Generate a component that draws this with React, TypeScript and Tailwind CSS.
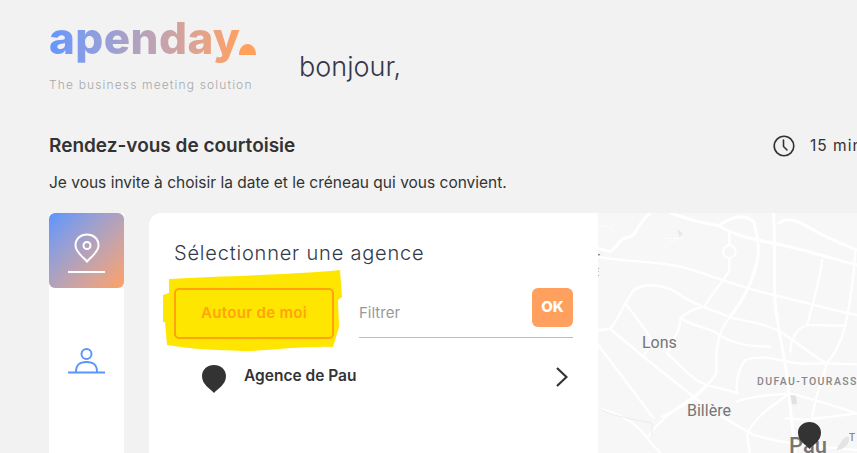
import React from 'react';

const Pin = ({ className }: { className: string }) => (
  <svg className={className} viewBox="0 0 24 28" fill="#333333">
    <path d="M12 28 C9 24 0 20 0 11 C0 4.5 5.4 0 12 0 C18.6 0 24 4.5 24 11 C24 20 15 24 12 28 Z" />
  </svg>
);

const roads = [
  'M3 130 L40 140 C70 120 60 100 100 95 C125 85 115 60 160 24',
  'M220 24 C280 45 320 55 365 62 C400 35 440 25 470 50 C480 90 490 130 480 170 C470 220 450 270 400 335',
  'M365 62 C420 95 480 105 530 115 C610 130 700 160 780 180',
  'M530 24 C535 140 530 240 535 300 C545 390 570 480 575 560 C580 620 590 690 595 744',
  'M545 55 C570 35 600 45 640 70 C680 95 730 115 780 135',
  'M3 155 C60 170 150 165 250 185 C330 205 400 240 530 270 C620 290 700 315 780 330',
  'M397 85 L397 120 M397 160 L397 195 C385 225 350 255 325 300',
  'M3 375 L40 372 C70 330 85 290 110 255 C150 230 210 240 250 270 C290 300 360 320 410 340 C470 350 510 360 550 380 C600 410 640 450 690 475 L780 478',
  'M325 305 C290 310 265 325 250 340 C290 365 340 370 360 385 C400 415 460 425 520 425',
  'M400 335 C370 370 355 410 358 500 C350 530 320 545 290 575 C240 610 190 640 150 700',
  'M40 372 C120 440 220 520 290 575 C340 620 420 660 470 690 C540 710 600 720 780 735',
  'M88 300 C120 340 150 375 165 410 C150 430 145 445 140 455 M250 340 C250 380 230 400 210 445 C250 480 290 530 330 540 C360 550 400 555 420 565',
  'M420 565 C415 530 425 490 445 465 C490 450 530 462 575 470 M575 470 C600 480 640 475 690 475',
  'M630 360 C650 290 670 220 675 165 M580 440 C580 400 600 370 630 360 L745 362 C760 290 770 230 775 135',
  'M690 475 C720 440 735 400 745 362 M690 475 L660 570 C650 610 640 650 640 680',
  'M575 565 C630 575 700 600 780 625 M420 590 C470 570 530 570 575 565 C540 600 480 620 450 690 L458 744',
  'M3 420 C50 480 110 560 170 640 M195 635 C250 605 290 590 330 540',
  'M3 610 C60 625 120 650 150 700 L190 744',
  'M565 640 L625 645 L780 625',
];

const Map = () => (
  <div className="relative flex-1 overflow-hidden bg-[#f7f7f7]">
    <svg className="h-[240px] w-[259px]" viewBox="3 24 777 720" fill="none" stroke="#ffffff" strokeLinecap="round" strokeLinejoin="round">
      {roads.map((d, i) => (
        <path key={i} d={d} strokeWidth={i < 5 ? 9 : 7} />
      ))}
      <circle cx="397" cy="140" r="19" strokeWidth="6" />
      <path d="M240 72 L258 85 L248 97 Z" fill="#e8e8e8" stroke="none" />
      <path d="M580 570 L597 572 L600 598 L585 598 Z" fill="#e2e2e2" stroke="none" />
      <path d="M718 735 C730 710 745 690 755 695 C762 715 740 735 718 735 Z" fill="#e4e4e4" stroke="none" />
      <path d="M195 100 L260 100 M200 128 C215 115 235 105 245 100 M5 60 L45 68 L50 85" stroke="#ffffff" strokeWidth="2" />
      <path d="M3 610 C60 640 110 640 165 655 L165 690" stroke="#ececec" strokeWidth="3" />
    </svg>
    <span className="absolute left-[-3px] top-[33px] font-['Roboto',sans-serif] text-[15px] text-[#757575]">r</span>
    <span className="absolute left-[-5px] top-[52px] font-['Roboto',sans-serif] text-[11px] text-[#888888]">E</span>
    <span className="absolute left-[44px] top-[120px] font-['Roboto',sans-serif] text-[16px] leading-5 text-[#757575]">Lons</span>
    <span className="absolute left-[89px] top-[188px] font-['Roboto',sans-serif] text-[16px] leading-5 text-[#757575]">Billère</span>
    <span className="absolute left-[159px] top-[161px] whitespace-nowrap font-['Roboto',sans-serif] text-[10.5px] font-medium leading-4 tracking-[1.4px] text-[#888888]">DUFAU-TOURASSE</span>
    <span className="absolute left-[191px] top-[221px] font-['Roboto',sans-serif] text-[22px] font-medium leading-6 text-[#757575]">Pau</span>
    <span className="absolute left-[251px] top-[217px] font-['Roboto',sans-serif] text-[10px] font-medium leading-4 text-[#888888]">T</span>
    <Pin className="absolute left-[200px] top-[207px] h-[31px] w-[23px]" />
  </div>
);

const App: React.FC = () => {
  return (
    <div className="h-[453px] w-[857px] overflow-hidden bg-[#f2f2f2] font-['Inter',sans-serif] text-[#333333]">
      <div className="flex h-[103px] w-[1000px] pl-[49px] pt-[13px]">
        <div className="w-[250px]">
          <div className="flex items-end">
            <span className="bg-gradient-to-r from-[#6496ff] to-[#ffa060] bg-clip-text text-[44px] font-extrabold leading-[50px] tracking-[0.4px] text-transparent">
              apenday
            </span>
            <svg className="mb-[8px] ml-[-1px] h-[11px] w-[17px]" viewBox="0 0 17 11" fill="#ffa05c">
              <path d="M0 11 C0 4 4 0 8.5 0 C13 0 17 4 17 11 Z" />
            </svg>
          </div>
          <p className="mt-[14px] text-[12px] font-light leading-4 tracking-[1.15px] text-[#a8a8a8]">
            The business meeting solution
          </p>
        </div>
        <h1 className="mt-[38px] text-[27px] font-light leading-8 text-[#33384a]">bonjour,</h1>
      </div>

      <div className="mt-[31px] flex w-[1000px] items-center pl-[49px]">
        <h2 className="w-[724px] text-[19px] font-semibold leading-6">Rendez-vous de courtoisie</h2>
        <svg className="h-[22px] w-[22px]" viewBox="0 0 22 22" fill="none" stroke="#333333" strokeWidth="1.6" strokeLinecap="round">
          <circle cx="11" cy="11" r="9.8" />
          <path d="M10.5 5 V11.5 L14 15" />
        </svg>
        <span className="ml-[15px] text-[15.5px] tracking-[1px]">15 min</span>
      </div>
      <p className="ml-[49px] mt-[15px] text-[15.5px] leading-5">Je vous invite à choisir la date et le créneau qui vous convient.</p>

      <div className="mt-[20px] flex w-[1000px] gap-[25px] pl-[49px]">
        <div className="h-[240px] w-[75px] bg-white">
          <div className="flex h-[75px] flex-col items-center rounded-md bg-gradient-to-br from-[#5b94ff] to-[#ffa060] pt-[20px]">
            <svg className="h-[30px] w-[26px]" viewBox="0 0 26 30" fill="none" stroke="#ffffff" strokeWidth="2">
              <path d="M13 28.5 C9 24 1.5 19 1.5 12.5 C1.5 6 6.5 1.5 13 1.5 C19.5 1.5 24.5 6 24.5 12.5 C24.5 19 17 24 13 28.5 Z" />
              <circle cx="13" cy="12.5" r="3.5" />
            </svg>
            <div className="mt-[8px] h-[2px] w-[37px] bg-white" />
          </div>
          <div className="flex justify-center pt-[60px]">
            <svg className="h-[26px] w-[37px]" viewBox="0 0 37 26" fill="none" stroke="#5b94ff" strokeWidth="2">
              <circle cx="18.5" cy="6" r="5" />
              <path d="M8 24 C8 16 12 14 18.5 14 C25 14 29 16 29 24" />
              <path d="M0 24.5 H37" />
            </svg>
          </div>
        </div>

        <div className="flex h-[240px] w-[800px] overflow-hidden rounded-tl-xl bg-white">
          <div className="w-[449px] shrink-0 px-[25px] pt-[25px]">
            <h3 className="text-[20px] font-light leading-[30px] tracking-[0.8px] text-[#33384a]">Sélectionner une agence</h3>
            <div className="mt-[20px] flex items-start">
              <div className="relative">
                <svg className="absolute left-[-11px] top-[-18px] h-[81px] w-[179px]" viewBox="163 270 179 81" fill="#ffe600">
                  <path d="M169 279 C220 276 290 275 340 270 L342 297 L338 300 L339 327 L333 347 C300 346 270 351 243 351 C215 350 190 349 167 345 L165 322 L163 322 L163 295 L169 293 Z" />
                </svg>
                <button className="relative flex h-[51px] w-[160px] items-center justify-center rounded-[5px] border-2 border-[#ffa30f] text-[15px] font-semibold tracking-[0.3px] text-[#ffa30f]">
                  Autour de moi
                </button>
              </div>
              <div className="ml-[25px] flex h-[50px] w-[214px] items-start justify-between border-b border-[#bdbdbd]">
                <span className="pt-[15px] text-[15px] leading-5 text-[#999999]">Filtrer</span>
                <button className="h-[39px] w-[41px] rounded-md bg-[#ffa05f] text-[15px] font-extrabold text-white">OK</button>
              </div>
            </div>
            <div className="mt-[26px] flex w-[399px] items-center pl-[28px]">
              <Pin className="h-[28px] w-[24px]" />
              <span className="ml-[18px] flex-1 pb-[6px] text-[15.5px] font-semibold leading-5">Agence de Pau</span>
              <svg className="mb-[4px] mr-[5px] h-[20px] w-[12px]" viewBox="0 0 12 20" fill="none" stroke="#333333" strokeWidth="2.2">
                <path d="M1 1 L10.5 10 L1 19" />
              </svg>
            </div>
          </div>
          <Map />
        </div>
      </div>
    </div>
  );
};

export default App;
